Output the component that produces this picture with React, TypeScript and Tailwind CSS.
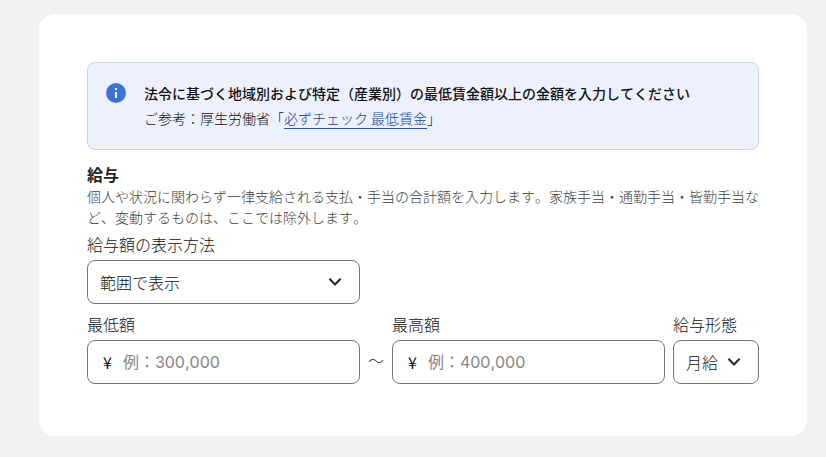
import { useState } from 'react';

const Chevron = () => (
  <svg
    viewBox="0 0 24 24"
    className="pointer-events-none absolute right-[13px] top-1/2 h-6 w-6 -translate-y-1/2 text-[#2b2b2b]"
    fill="none"
    stroke="currentColor"
    strokeWidth="2.1"
    strokeLinejoin="miter"
    aria-hidden="true"
  >
    <path d="M6.4 8.8 12 14.4l5.6-5.6" />
  </svg>
);

type SelectFieldProps = {
  id: string;
  label: string;
  options: string[];
};

const SelectField = ({ id, label, options }: SelectFieldProps) => {
  const [value, setValue] = useState(options[0]);

  return (
    <div>
      <label htmlFor={id} className="mb-1 block whitespace-nowrap">{label}</label>
      <div className="relative">
        <select
          id={id}
          value={value}
          onChange={(e) => setValue(e.target.value)}
          className="h-11 w-full appearance-none rounded-lg border border-[#767676] bg-white pl-3 focus:outline-none focus:ring-2 focus:ring-[#3f73d6]"
        >
          {options.map(option => (
            <option key={option} value={option}>{option}</option>
          ))}
        </select>
        <Chevron />
      </div>
    </div>
  );
};

type AmountFieldProps = {
  id: string;
  label: string;
  placeholder: string;
};

const AmountField = ({ id, label, placeholder }: AmountFieldProps) => (
  <div>
    <label htmlFor={id} className="mb-1 block">{label}</label>
    <div className="flex h-11 items-center gap-[11px] rounded-lg border border-[#767676] bg-white px-[15px] focus-within:ring-2 focus-within:ring-[#3f73d6]">
      <span className="font-normal">¥</span>
      <input
        id={id}
        type="text"
        inputMode="numeric"
        placeholder={placeholder}
        className="w-full min-w-0 flex-1 font-['Inter','Noto_Sans_CJK_JP',sans-serif] font-normal placeholder:text-[#858585] focus:outline-none"
      />
    </div>
  </div>
);

const App = () => {
  return (
    <div className="min-h-screen bg-[#f3f2f0] pb-5 pl-[39px] pr-[19px] pt-[14px] font-['Noto_Sans_CJK_JP',sans-serif] text-base font-light leading-6 text-[#111111] [font-kerning:none]">
      <main className="rounded-2xl bg-white px-12 pb-[52px] pt-12">
        <div className="flex gap-[18px] rounded-lg border border-[#c8d2f6] bg-[#edf1fe] px-[18px] py-[18px] text-sm leading-[25px]">
          <svg viewBox="0 0 20 20" className="mt-[2px] h-5 w-5 shrink-0" aria-hidden="true">
            <circle cx="10" cy="10" r="10" fill="#3f72d5" />
            <path d="M9 5h2v2H9zM9 9h2v6H9z" fill="#fff" />
          </svg>
          <div>
            <p className="font-medium">法令に基づく地域別および特定（産業別）の最低賃金額以上の金額を入力してください</p>
            <p>
              ご参考：厚生労働省「<a href="#" className="border-b border-[#1d55b0] text-[#0f469f]">必ずチェック 最低賃金</a>」
            </p>
          </div>
        </div>

        <h2 className="mt-3 font-bold text-[#242424]">給与</h2>
        <p className="mb-1 text-sm leading-[21px] text-[#404040]">
          個人や状況に関わらず一律支給される支払・手当の合計額を入力します。家族手当・通勤手当・皆勤手当など、変動するものは、ここでは除外します。
        </p>

        <div className="grid grid-cols-[minmax(0,1fr)_16px_minmax(0,1fr)_86px] gap-2">
          <SelectField id="display" label="給与額の表示方法" options={['範囲で表示', '固定額で表示']} />
          <div className="col-span-3" />
          <AmountField id="min" label="最低額" placeholder="例：300,000" />
          <span className="flex h-11 items-center self-end pb-1 text-[#404040]">～</span>
          <AmountField id="max" label="最高額" placeholder="例：400,000" />
          <SelectField id="type" label="給与形態" options={['月給', '時給', '日給', '年俸']} />
        </div>
      </main>
    </div>
  );
};

export default App;
